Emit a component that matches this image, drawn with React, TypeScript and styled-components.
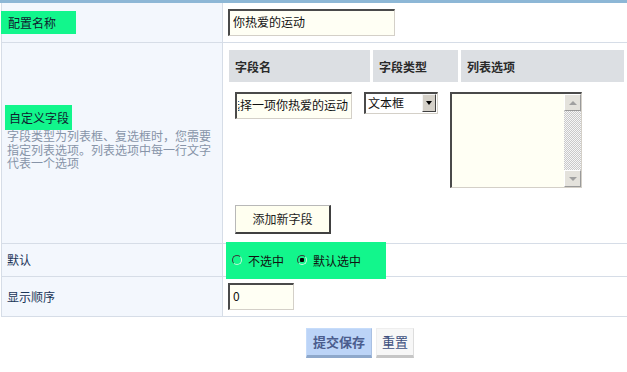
import React, { useLayoutEffect, useRef } from "react";
import styled, { createGlobalStyle } from "styled-components";

const GlobalStyle = createGlobalStyle`
  html, body { margin: 0; padding: 0; background: #ffffff; }
  body {
    font-family: "Noto Sans CJK SC", "Noto Sans", "Liberation Sans", sans-serif;
    font-size: 12px;
    color: #222;
  }
  * { box-sizing: border-box; }
`;

const Page = styled.form`
  width: 627px;
`;

const Table = styled.div`
  border-top: 3px solid #8db7d6;
  padding-left: 1px;
`;

const Row = styled.div<{ $h: number }>`
  display: grid;
  grid-template-columns: 222px 1fr;
  min-height: ${(p) => p.$h + 1}px;
  border-bottom: 1px solid #d6dde7;
`;

const LabelCell = styled.div<{ $padBottom?: number }>`
  display: flex;
  flex-direction: column;
  justify-content: center;
  align-items: flex-start;
  background: #f3f7fd;
  border-left: 1px solid #d6dde7;
  border-right: 1px solid #d6dde7;
  padding: 0 4px ${(p) => p.$padBottom ?? 0}px 5px;
  color: #1a3558;
  line-height: 14px;
`;

const Highlight = styled.span<{ $ml: number; $pl: number; $pr: number; $h: number }>`
  display: inline-flex;
  align-items: center;
  background: #12f68c;
  color: #10202f;
  height: ${(p) => p.$h}px;
  margin-left: ${(p) => p.$ml}px;
  padding-left: ${(p) => p.$pl}px;
  padding-right: ${(p) => p.$pr}px;
`;

const Hint = styled.p`
  margin: -1px 0 0 0;
  color: #8794a8;
  line-height: 13.5px;
  width: 210px;
`;

const ValueCell = styled.div<{ $align?: string }>`
  display: flex;
  flex-direction: column;
  justify-content: ${(p) => p.$align ?? "center"};
  align-items: flex-start;
  padding-left: 5px;
`;

const TextInput = styled.input<{ $w: number }>`
  width: ${(p) => p.$w}px;
  height: 27px;
  border-style: solid;
  border-width: 2px 1px 1px 2px;
  border-color: #4a4a4a #d4d0c8 #d4d0c8 #4a4a4a;
  background: #fffff4;
  font: inherit;
  color: #111;
  padding: 0 3px 4px 3px;
  outline: none;
`;

const FieldsArea = styled.div`
  width: 100%;
  padding: 7px 3px 0 1px;
  display: flex;
  flex-direction: column;
  align-items: flex-start;
`;

const HeaderRow = styled.div`
  width: 100%;
  display: grid;
  grid-template-columns: 141px 85px 1fr;
  gap: 3px;
`;

const HeaderCell = styled.div`
  height: 32px;
  background: #dcdfe3;
  display: flex;
  align-items: center;
  padding-left: 6px;
  font-weight: bold;
  color: #2a2a2a;
`;

const InputsRow = styled.div`
  display: flex;
  align-items: flex-start;
  gap: 12px;
  margin-top: 10px;
  padding-left: 6px;
`;

const SelectBox = styled.div`
  position: relative;
  width: 74px;
  height: 22px;
`;

const Select = styled.select`
  appearance: none;
  -webkit-appearance: none;
  width: 100%;
  height: 100%;
  border-style: solid;
  border-width: 2px 1px 1px 2px;
  border-color: #4a4a4a #d4d0c8 #d4d0c8 #4a4a4a;
  background: #ffffff;
  font: inherit;
  color: #111;
  padding: 0 0 2px 2px;
  outline: none;
  border-radius: 0;
`;

const DropButton = styled.span`
  position: absolute;
  right: 2px;
  top: 2px;
  width: 14px;
  height: 18px;
  background: #d4d0c8;
  border-style: solid;
  border-width: 1px;
  border-color: #f4f4f4 #404040 #404040 #f4f4f4;
  pointer-events: none;
  display: flex;
  align-items: center;
  justify-content: center;

  &::after {
    content: "";
    border-left: 3.5px solid transparent;
    border-right: 3.5px solid transparent;
    border-top: 4px solid #000;
  }
`;

const TextAreaBox = styled.div`
  display: flex;
  width: 132px;
  height: 96px;
  border-style: solid;
  border-width: 2px 1px 1px 2px;
  border-color: #4a4a4a #d4d0c8 #d4d0c8 #4a4a4a;
  background: #fffff4;
`;

const TextArea = styled.textarea`
  flex: 1;
  min-width: 0;
  border: none;
  background: transparent;
  resize: none;
  font: inherit;
  outline: none;
  padding: 2px;
`;

const ScrollBar = styled.div`
  width: 17px;
  display: flex;
  flex-direction: column;
  background: repeating-conic-gradient(#c9c9c9 0 25%, #f6f6f6 0 50%) 0 0 / 2px 2px;
`;

const ScrollButton = styled.span<{ $dir: "up" | "down" }>`
  width: 17px;
  height: 17px;
  background: #e4e2dc;
  border-style: solid;
  border-width: 1px;
  border-color: #ffffff #9a9a9a #9a9a9a #ffffff;
  display: flex;
  align-items: center;
  justify-content: center;

  &::after {
    content: "";
    border-left: 4px solid transparent;
    border-right: 4px solid transparent;
    ${(p) =>
      p.$dir === "up"
        ? "border-bottom: 4px solid #a0a0a0;"
        : "border-top: 4px solid #a0a0a0;"}
  }
`;

const ScrollTrack = styled.span`
  flex: 1;
`;

const AddButton = styled.button`
  margin: 17px 0 0 6px;
  width: 96px;
  height: 29px;
  background: #fffff0;
  border-style: solid;
  border-width: 1px 2px 2px 1px;
  border-color: #b8b8b8 #404040 #404040 #b8b8b8;
  font: inherit;
  color: #222;
  padding: 0 0 2px 0;
`;

const RadioGroup = styled.div`
  display: flex;
  align-items: center;
  height: 37px;
  width: 160px;
  margin: -2px 0 -3px -2px;
  padding-left: 6px;
  background: #12f68c;
`;

const RadioLabel = styled.label`
  display: inline-flex;
  align-items: center;
  gap: 6px;
  margin-right: 13px;
  color: #111;
`;

const Radio = styled.input`
  appearance: none;
  -webkit-appearance: none;
  margin: 0 0 1px 0;
  width: 10px;
  height: 10px;
  border-radius: 50%;
  border: 1px solid;
  border-color: #3a3a3a #c8f5dc #c8f5dc #3a3a3a;
  background: transparent;

  &:checked {
    background: radial-gradient(circle, #000 0 2px, transparent 2.5px);
  }
`;

const ButtonBar = styled.div`
  display: flex;
  gap: 4px;
  padding: 11px 0 0 306px;
`;

const ActionButton = styled.button<{ $primary?: boolean }>`
  height: 30px;
  width: ${(p) => (p.$primary ? 66 : 38)}px;
  font: inherit;
  font-size: 13px;
  font-weight: ${(p) => (p.$primary ? "bold" : "normal")};
  color: ${(p) => (p.$primary ? "#4b5d8e" : "#3d4f7e")};
  background: ${(p) => (p.$primary ? "#bcd4f7" : "#f7f7f7")};
  border-style: solid;
  border-width: 1px 1px 3px 1px;
  border-color: ${(p) =>
    p.$primary ? "#c6dcfa #a9c0e2 #8ea8cb #c6dcfa" : "#eeeeee #dddddd #c6c6c6 #eeeeee"};
  padding: 0 0 1px 0;
`;

function ScrolledInput({ value, width }: { value: string; width: number }) {
  const ref = useRef<HTMLInputElement>(null);
  useLayoutEffect(() => {
    if (ref.current) ref.current.scrollLeft = 10000;
  }, []);
  return <TextInput ref={ref} $w={width} defaultValue={value} style={{ paddingLeft: 1 }} />;
}

export default function App() {
  return (
    <>
      <GlobalStyle />
      <Page onSubmit={(e) => e.preventDefault()}>
        <Table>
          <Row $h={39}>
            <LabelCell>
              <Highlight $ml={-6} $pl={7} $pr={20} $h={23}>
                配置名称
              </Highlight>
            </LabelCell>
            <ValueCell>
              <TextInput $w={167} defaultValue="你热爱的运动" />
            </ValueCell>
          </Row>

          <Row $h={200}>
            <LabelCell $padBottom={11}>
              <Highlight $ml={-2} $pl={4} $pr={3} $h={25}>
                自定义字段
              </Highlight>
              <Hint>字段类型为列表框、复选框时，您需要指定列表选项。列表选项中每一行文字代表一个选项</Hint>
            </LabelCell>
            <ValueCell $align="flex-start">
              <FieldsArea>
                <HeaderRow>
                  <HeaderCell>字段名</HeaderCell>
                  <HeaderCell>字段类型</HeaderCell>
                  <HeaderCell>列表选项</HeaderCell>
                </HeaderRow>
                <InputsRow>
                  <ScrolledInput value="选择一项你热爱的运动" width={117} />
                  <SelectBox>
                    <Select defaultValue="text">
                      <option value="text">文本框</option>
                      <option value="select">列表框</option>
                      <option value="checkbox">复选框</option>
                    </Select>
                    <DropButton />
                  </SelectBox>
                  <TextAreaBox>
                    <TextArea />
                    <ScrollBar>
                      <ScrollButton $dir="up" />
                      <ScrollTrack />
                      <ScrollButton $dir="down" />
                    </ScrollBar>
                  </TextAreaBox>
                </InputsRow>
                <AddButton type="button">添加新字段</AddButton>
              </FieldsArea>
            </ValueCell>
          </Row>

          <Row $h={32}>
            <LabelCell>默认</LabelCell>
            <ValueCell>
              <RadioGroup>
                <RadioLabel>
                  <Radio type="radio" name="def" value="0" />
                  不选中
                </RadioLabel>
                <RadioLabel>
                  <Radio type="radio" name="def" value="1" defaultChecked />
                  默认选中
                </RadioLabel>
              </RadioGroup>
            </ValueCell>
          </Row>

          <Row $h={39}>
            <LabelCell>显示顺序</LabelCell>
            <ValueCell>
              <TextInput $w={66} defaultValue="0" />
            </ValueCell>
          </Row>
        </Table>

        <ButtonBar>
          <ActionButton type="submit" $primary>
            提交保存
          </ActionButton>
          <ActionButton type="reset">重置</ActionButton>
        </ButtonBar>
      </Page>
    </>
  );
}
